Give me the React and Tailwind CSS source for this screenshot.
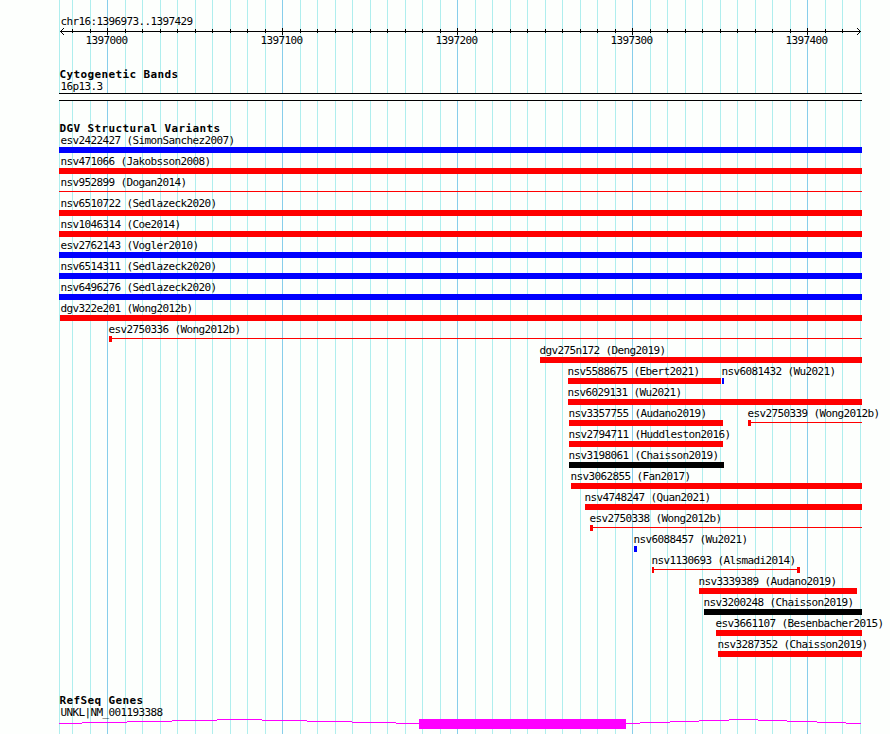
const LEFT = 59
const RIGHT = 862

const BLUE = 'bg-[#0000ff]'
const RED = 'bg-[#ff0000]'
const BLACK = 'bg-black'

// one entry per row, each row can hold several features
// capStart / capEnd: features drawn as a thin line with small end boxes
const rows = [
  [{ name: 'esv2422427 (SimonSanchez2007)', start: 59, end: 862, color: BLUE }],
  [{ name: 'nsv471066 (Jakobsson2008)', start: 59, end: 862, color: RED }],
  [{ name: 'nsv952899 (Dogan2014)', start: 59, end: 862, color: RED, thin: true }],
  [{ name: 'nsv6510722 (Sedlazeck2020)', start: 59, end: 862, color: RED }],
  [{ name: 'nsv1046314 (Coe2014)', start: 59, end: 862, color: RED }],
  [{ name: 'esv2762143 (Vogler2010)', start: 59, end: 862, color: BLUE }],
  [{ name: 'nsv6514311 (Sedlazeck2020)', start: 59, end: 862, color: BLUE }],
  [{ name: 'nsv6496276 (Sedlazeck2020)', start: 59, end: 862, color: BLUE }],
  [{ name: 'dgv322e201 (Wong2012b)', start: 60, end: 862, color: RED }],
  [{ name: 'esv2750336 (Wong2012b)', start: 109, end: 862, color: RED, thin: true, capStart: 3 }],
  [{ name: 'dgv275n172 (Deng2019)', start: 540, end: 862, color: RED }],
  [
    { name: 'nsv5588675 (Ebert2021)', start: 568, end: 721, color: RED },
    { name: 'nsv6081432 (Wu2021)', start: 722, end: 724, color: BLUE },
  ],
  [{ name: 'nsv6029131 (Wu2021)', start: 568, end: 862, color: RED }],
  [
    { name: 'nsv3357755 (Audano2019)', start: 569, end: 723, color: RED },
    { name: 'esv2750339 (Wong2012b)', start: 748, end: 862, color: RED, thin: true, capStart: 3 },
  ],
  [{ name: 'nsv2794711 (Huddleston2016)', start: 569, end: 723, color: RED }],
  [{ name: 'nsv3198061 (Chaisson2019)', start: 569, end: 724, color: BLACK }],
  [{ name: 'nsv3062855 (Fan2017)', start: 571, end: 862, color: RED }],
  [{ name: 'nsv4748247 (Quan2021)', start: 585, end: 862, color: RED }],
  [{ name: 'esv2750338 (Wong2012b)', start: 590, end: 862, color: RED, thin: true, capStart: 3 }],
  [{ name: 'nsv6088457 (Wu2021)', start: 634, end: 637, color: BLUE }],
  [{ name: 'nsv1130693 (Alsmadi2014)', start: 652, end: 800, color: RED, thin: true, capStart: 2, capEnd: 3 }],
  [{ name: 'nsv3339389 (Audano2019)', start: 699, end: 857, color: RED }],
  [{ name: 'nsv3200248 (Chaisson2019)', start: 704, end: 862, color: BLACK }],
  [{ name: 'esv3661107 (Besenbacher2015)', start: 716, end: 862, color: RED }],
  [{ name: 'nsv3287352 (Chaisson2019)', start: 718, end: 862, color: RED }],
]

// a grid line every 10 bp, 17.5px apart, starting at 1396980
const gridLines = Array.from({ length: 46 }, (_, i) => ({
  x: Math.round(72 + i * 17.5),
  major: i % 10 === 2,
}))

const rulerLabels = ['1397000', '1397100', '1397200', '1397300', '1397400']

// stepped intron line: [x1, x2, y] inside the gene strip
const intron = [
  [59, 82, 4], [82, 127, 3], [127, 172, 2], [172, 217, 1], [217, 262, 0],
  [262, 307, 1], [307, 352, 2], [352, 396, 3], [396, 419, 4],
  [626, 640, 4], [640, 670, 3], [670, 699, 2], [699, 729, 1], [729, 758, 0],
  [758, 787, 1], [787, 817, 2], [817, 846, 3], [846, 861, 4],
]

function GridLines() {
  return (
    <svg className="absolute inset-0" width="890" height="734" shapeRendering="crispEdges">
      <rect x={LEFT} y="0" width="1" height="734" fill="#afeeee" />
      {gridLines.map(({ x, major }) => (
        <rect key={x} x={x} y="0" width="1" height="734" fill={major ? '#87ceeb' : '#afeeee'} />
      ))}
    </svg>
  )
}

function Label({ children }) {
  return (
    <p className="h-3 pl-[0.5px] text-[11px] leading-3 tracking-[-0.622px] whitespace-pre">
      {children}
    </p>
  )
}

function Heading({ children }) {
  return (
    <h2 className="ml-[59px] h-3 pl-[0.5px] text-[11px] leading-3 font-bold tracking-[0.378px] whitespace-pre">
      {children}
    </h2>
  )
}

function Ruler() {
  return (
    <div>
      <svg className="block" width="890" height="7" shapeRendering="crispEdges">
        <rect x="60" y="3" width="801" height="1" />
        {gridLines.slice(0, -1).map(({ x, major }) => (
          <rect key={x} x={x} y={major ? 0 : 1} width="1" height={major ? 7 : 4} />
        ))}
        {[1, 2, 3].map((d) => (
          <g key={d}>
            <rect x={60 + d} y={3 - d} width="1" height="1" />
            <rect x={60 + d} y={3 + d} width="1" height="1" />
            <rect x={860 - d} y={3 - d} width="1" height="1" />
            <rect x={860 - d} y={3 + d} width="1" height="1" />
          </g>
        ))}
      </svg>
      <div className="ml-[85px] flex gap-[133px]">
        {rulerLabels.map((label) => (
          <div key={label} className="w-[42px]">
            <Label>{label}</Label>
          </div>
        ))}
      </div>
    </div>
  )
}

function Feature({ name, start, end, color, thin, capStart, capEnd }) {
  return (
    <div className="col-start-1 row-start-1">
      <div style={{ marginLeft: Math.max(60, start - 1) }}>
        <Label>{name}</Label>
      </div>
      <div className="flex h-1.5" style={{ marginLeft: start, width: end - start }}>
        {capStart && <span className={color} style={{ width: capStart }} />}
        <span className={`flex-1 ${color} ${thin ? 'mt-0.5 h-px' : 'h-1.5'}`} />
        {capEnd && <span className={color} style={{ width: capEnd }} />}
      </div>
    </div>
  )
}

function App() {
  return (
    <main className="relative h-[734px] w-[890px] overflow-hidden bg-[#fdfffd] font-['DejaVu_Sans_Mono',monospace] text-black">
      <GridLines />
      <div className="relative pt-4">
        <div className="ml-[60px]">
          <Label>chr16:1396973..1397429</Label>
        </div>
        <Ruler />

        <section className="mt-[22px]">
          <Heading>Cytogenetic Bands</Heading>
          <div className="ml-[60px]">
            <Label>16p13.3</Label>
          </div>
          <div
            className="ml-[59px] h-2 border-y border-black bg-[#fdfffd]"
            style={{ width: RIGHT - LEFT }}
          />
        </section>

        <section className="mt-[22px]">
          <Heading>DGV Structural Variants</Heading>
          {rows.map((features) => (
            <div key={features[0].name} className="grid h-[21px] grid-cols-1">
              {features.map((feature) => (
                <Feature key={feature.name} {...feature} />
              ))}
            </div>
          ))}
        </section>

        <section className="mt-[35px]">
          <Heading>RefSeq Genes</Heading>
          <div className="ml-[60px]">
            <Label>UNKL|NM_001193388</Label>
          </div>
          <svg className="block" width="890" height="10" fill="#ff00ff" shapeRendering="crispEdges">
            {intron.map(([x1, x2, y]) => (
              <rect key={x1} x={x1} y={y} width={x2 - x1} height="1" />
            ))}
            <rect x="419" y="0" width="207" height="10" />
          </svg>
        </section>
      </div>
    </main>
  )
}

export default App
